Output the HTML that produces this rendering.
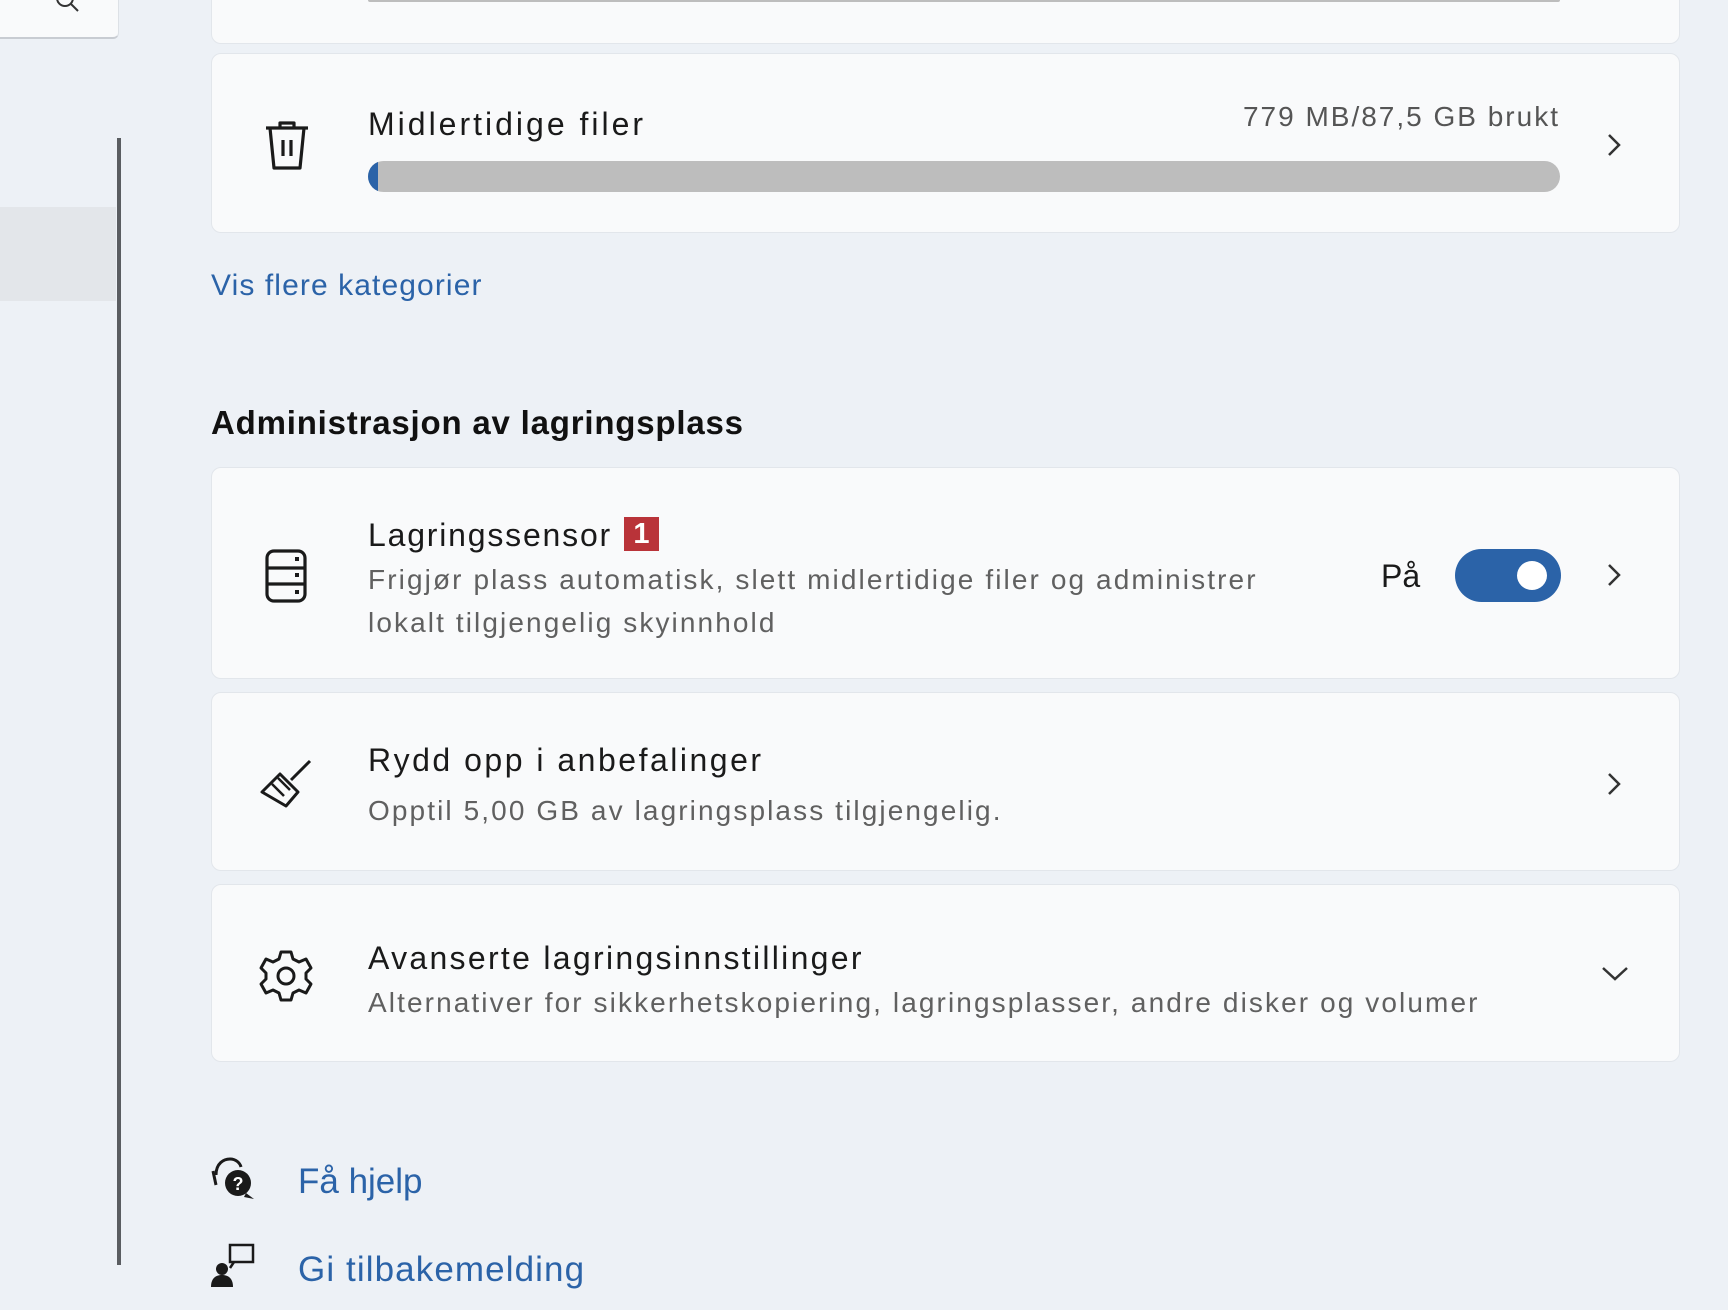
<!DOCTYPE html>
<html><head><meta charset="utf-8"><style>
*{margin:0;padding:0;box-sizing:border-box}
body{width:1728px;height:1310px;background:#edf1f6;font-family:"Segoe UI","Liberation Sans",sans-serif;position:relative;overflow:hidden;color:#1a1a1a}
.a{position:absolute;white-space:nowrap}
.card{position:absolute;left:211px;width:1469px;background:#f9fafb;border:1px solid #e2e6eb;border-radius:10px}
.t{font-size:32px;color:#1a1a1a;letter-spacing:2.3px}
.d{font-size:28px;color:#606060;letter-spacing:2.1px}
.blue{color:#2b63a8}
svg{position:absolute}
</style></head><body>
<div class="a" style="left:0;top:0;width:119px;height:39px;background:#f9fafb;border-bottom:2px solid #c8ccd2;border-right:1px solid #dde1e6;border-bottom-right-radius:6px"></div>
<svg style="left:52px;top:0" width="30" height="14" viewBox="0 0 30 14"><circle cx="13" cy="-2" r="8" fill="none" stroke="#333" stroke-width="2"/><line x1="19" y1="4" x2="26" y2="11" stroke="#333" stroke-width="2"/></svg>
<div class="a" style="left:0;top:207px;width:116px;height:94px;background:#e3e6ea"></div>
<div class="a" style="left:117px;top:138px;width:4px;height:1127px;background:#5a5d61"></div>

<div class="card" style="top:-10px;height:54px"></div>
<div class="a" style="left:368px;top:-2px;width:1192px;height:4px;background:#bdbdbd;border-radius:2px"></div>

<div class="card" style="top:53px;height:180px"></div>
<svg style="left:262px;top:118px" width="50" height="56" viewBox="0 0 50 56"><path d="M4 10h42M18 10V5h14v5M8 10l4 40h26l4-40" fill="none" stroke="#1a1a1a" stroke-width="3.2" stroke-linejoin="round"/><path d="M21 22v16M29 22v16" stroke="#1a1a1a" stroke-width="3.2"/></svg>
<div class="a t" style="left:368px;top:106px;letter-spacing:3px">Midlertidige filer</div>
<div class="a d" style="right:168px;top:101px;font-size:28px;color:#555;letter-spacing:2px">779 MB/87,5 GB brukt</div>
<div class="a" style="left:368px;top:161px;width:1192px;height:31px;background:#bdbdbd;border-radius:16px;overflow:hidden"><div style="width:10px;height:31px;background:#2b63a8"></div></div>
<svg style="left:1605px;top:131px" width="18" height="28" viewBox="0 0 18 28"><path d="M4 4l10 10L4 24" fill="none" stroke="#333" stroke-width="2.5"/></svg>

<div class="a blue" style="left:211px;top:269px;font-size:30px;letter-spacing:1.1px">Vis flere kategorier</div>
<div class="a" style="left:211px;top:404px;font-size:33px;font-weight:bold;color:#111;letter-spacing:0.8px">Administrasjon av lagringsplass</div>

<div class="card" style="top:467px;height:212px"></div>
<svg style="left:264px;top:548px" width="46" height="56" viewBox="0 0 46 56"><rect x="3" y="3" width="38" height="50" rx="7" fill="none" stroke="#1a1a1a" stroke-width="3.2"/><path d="M3 20h38M3 36h38" stroke="#1a1a1a" stroke-width="3.2"/><rect x="31" y="9" width="4" height="4" fill="#1a1a1a"/><rect x="31" y="25" width="4" height="4" fill="#1a1a1a"/><rect x="31" y="42" width="4" height="4" fill="#1a1a1a"/></svg>
<div class="a t" style="left:368px;top:517px;letter-spacing:1.8px">Lagringssensor</div>
<div class="a" style="left:624px;top:517px;width:35px;height:34px;background:#b93339;color:#fff;font:bold 29px 'Liberation Sans',sans-serif;text-align:center;line-height:34px">1</div>
<div class="a d" style="left:368px;top:564px">Frigjør plass automatisk, slett midlertidige filer og administrer</div>
<div class="a d" style="left:368px;top:607px">lokalt tilgjengelig skyinnhold</div>
<div class="a t" style="left:1381px;top:558px;letter-spacing:0">På</div>
<div class="a" style="left:1455px;top:549px;width:106px;height:53px;background:#2b63a8;border-radius:27px"><div style="position:absolute;right:14px;top:12px;width:30px;height:29px;background:#fff;border-radius:50%"></div></div>
<svg style="left:1605px;top:561px" width="18" height="28" viewBox="0 0 18 28"><path d="M4 4l10 10L4 24" fill="none" stroke="#333" stroke-width="2.5"/></svg>

<div class="card" style="top:692px;height:179px"></div>
<svg style="left:258px;top:756px" width="58" height="56" viewBox="0 0 58 56"><path d="M4 36L22 18l18 18-12 14z" fill="none" stroke="#1a1a1a" stroke-width="3" stroke-linejoin="round"/><path d="M14 28l12 12M20 22l12 12" stroke="#1a1a1a" stroke-width="2.5"/><path d="M33 24L52 5" stroke="#1a1a1a" stroke-width="3"/></svg>
<div class="a t" style="left:368px;top:742px;letter-spacing:2.5px">Rydd opp i anbefalinger</div>
<div class="a d" style="left:368px;top:795px">Opptil 5,00 GB av lagringsplass tilgjengelig.</div>
<svg style="left:1605px;top:770px" width="18" height="28" viewBox="0 0 18 28"><path d="M4 4l10 10L4 24" fill="none" stroke="#333" stroke-width="2.5"/></svg>

<div class="card" style="top:884px;height:178px"></div>
<svg style="left:259px;top:949px" width="54" height="54" viewBox="0 0 54 54"><path d="M22 3h10l2 7 6 3 7-3 5 9-5 5v6l5 5-5 9-7-3-6 3-2 7H22l-2-7-6-3-7 3-5-9 5-5v-6l-5-5 5-9 7 3 6-3z" fill="none" stroke="#1a1a1a" stroke-width="3" stroke-linejoin="round"/><circle cx="27" cy="27" r="8" fill="none" stroke="#1a1a1a" stroke-width="3"/></svg>
<div class="a t" style="left:368px;top:940px">Avanserte lagringsinnstillinger</div>
<div class="a d" style="left:368px;top:987px">Alternativer for sikkerhetskopiering, lagringsplasser, andre disker og volumer</div>
<svg style="left:1600px;top:963px" width="30" height="20" viewBox="0 0 30 20"><path d="M3 5l12 11L27 5" fill="none" stroke="#333" stroke-width="2.5"/></svg>

<svg style="left:210px;top:1155px" width="46" height="46" viewBox="0 0 46 46"><path d="M6 20C6 8 14 4 20 4c6 0 10 4 11 8" fill="none" stroke="#1a1a1a" stroke-width="3"/><path d="M3 16l3 14" stroke="#1a1a1a" stroke-width="3"/><circle cx="28" cy="28" r="13" fill="#1a1a1a"/><path d="M36 38l8 6-10-2z" fill="#1a1a1a"/><text x="28" y="35" font-size="18" font-weight="bold" fill="#fff" text-anchor="middle" font-family="Liberation Sans">?</text></svg>
<div class="a blue" style="left:298px;top:1162px;font-size:35px">Få hjelp</div>
<svg style="left:210px;top:1243px" width="46" height="46" viewBox="0 0 46 46"><rect x="20" y="2" width="23" height="17" fill="none" stroke="#1a1a1a" stroke-width="2.5"/><path d="M24 19l-4 6" stroke="#1a1a1a" stroke-width="2.5"/><circle cx="12" cy="26" r="6" fill="#1a1a1a"/><path d="M1 44c0-9 5-12 11-12s11 3 11 12z" fill="#1a1a1a"/></svg>
<div class="a blue" style="left:298px;top:1250px;font-size:35px;letter-spacing:1.1px">Gi tilbakemelding</div>
</body></html>
